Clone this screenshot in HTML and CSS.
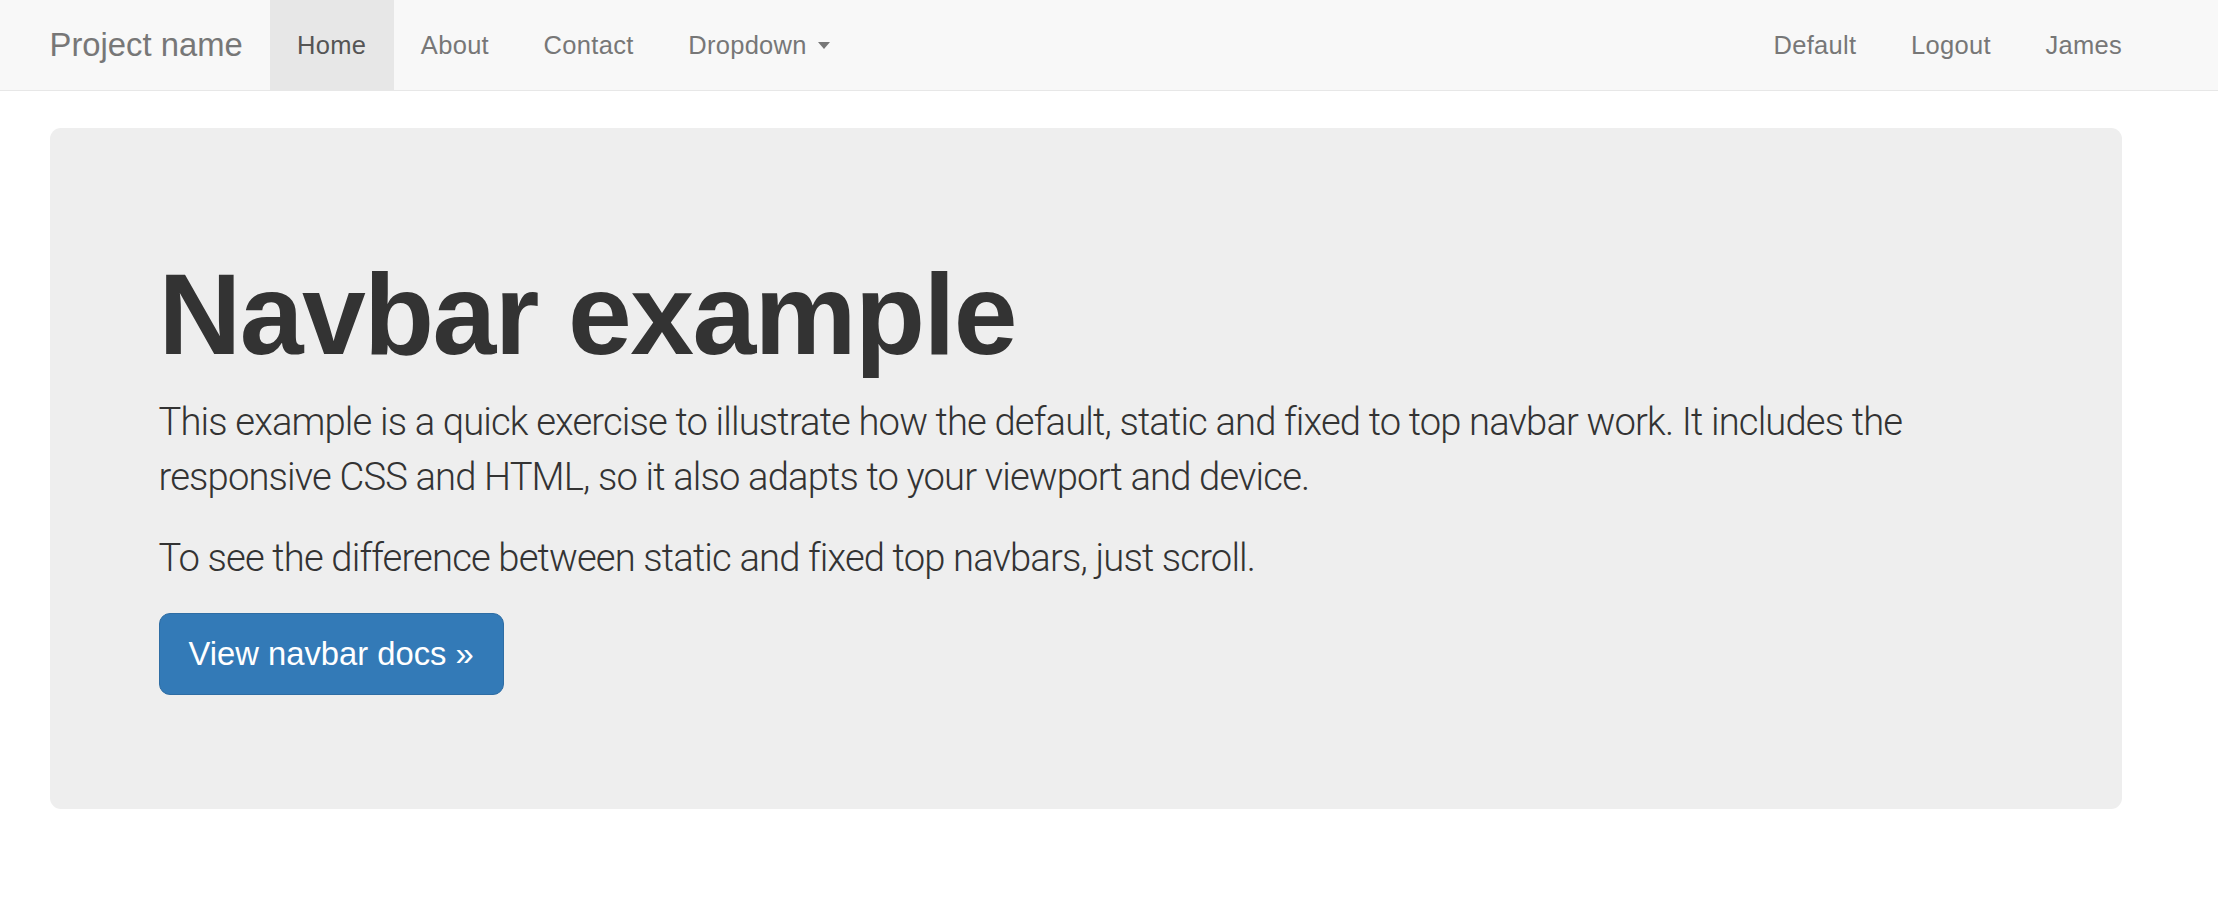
FILE: index.html
```html
<!DOCTYPE html>
<html lang="en">
<head>
<meta charset="utf-8">
<title>Navbar Template</title>
<link rel="stylesheet" href="styles.css">
</head>
<body>
<nav class="navbar">
  <div class="container nav-inner">
    <a class="brand" href="#">Project name</a>
    <ul class="nav">
      <li class="active"><a href="#">Home</a></li>
      <li><a href="#">About</a></li>
      <li><a href="#">Contact</a></li>
      <li><a href="#">Dropdown <span class="caret"></span></a></li>
    </ul>
    <ul class="nav nav-right">
      <li><a href="#">Default</a></li>
      <li><a href="#">Logout</a></li>
      <li><a href="#">James</a></li>
    </ul>
  </div>
</nav>
<main class="container">
  <div class="jumbotron">
    <h1>Navbar example</h1>
    <p>This example is a quick exercise to illustrate how the default, static and fixed to top navbar work. It includes the responsive CSS and HTML, so it also adapts to your viewport and device.</p>
    <p>To see the difference between static and fixed top navbars, just scroll.</p>
    <p class="actions"><a class="btn" href="#">View navbar docs &raquo;</a></p>
  </div>
</main>
</body>
</html>
```
FILE: styles.css
```css
* { box-sizing: border-box; }
html, body { margin: 0; padding: 0; }
body {
  font-family: "Liberation Sans", Arial, sans-serif;
  font-size: 25.5px;
  line-height: 1.43;
  color: #333;
  background: #fff;
}
a { text-decoration: none; }
.container {
  margin-left: 49.5px;
  width: 2072.5px;
}
.navbar {
  background: #f8f8f8;
  border-bottom: 1px solid #e7e7e7;
  height: 91px;
}
.nav-inner {
  display: flex;
  align-items: stretch;
  height: 90px;
}
.brand {
  display: block;
  margin-left: -27px;
  padding: 26.8px 27px;
  font-size: 32.8px;
  line-height: 36.4px;
  color: #777;
}
.nav {
  display: flex;
  list-style: none;
  margin: 0;
  padding: 0;
}
.nav li { display: block; }
.nav a {
  display: block;
  padding: 26.8px 27.3px;
  line-height: 36.4px;
  color: #777;
  font-size: 25.5px;
  letter-spacing: 0.3px;
}
.nav .active a {
  background: #e7e7e7;
  color: #555;
}
.nav-right {
  margin-left: auto;
  margin-right: -27.3px;
}
.caret {
  display: inline-block;
  width: 0;
  height: 0;
  margin-left: 3.6px;
  border-top: 7px solid #777;
  border-left: 6.5px solid transparent;
  border-right: 6.5px solid transparent;
  vertical-align: middle;
  position: relative;
  top: -2px;
}
.jumbotron {
  margin-top: 37px;
  padding: 87px 109px;
  background: #eee;
  border-radius: 11px;
}
.jumbotron h1 {
  margin: 36px 0 18px;
  font-size: 114.7px;
  line-height: 126px;
  font-weight: 700;
  letter-spacing: -1.6px;
  color: #333;
}
.jumbotron p {
  margin: 0 0 27.3px;
  font-family: Roboto, "Liberation Sans", sans-serif;
  font-weight: 300;
  font-size: 38.2px;
  line-height: 54.6px;
  letter-spacing: -0.85px;
  color: #333;
}
.btn {
  display: inline-block;
  padding: 18px 29px;
  font-family: "Liberation Sans", Arial, sans-serif;
  font-size: 32.76px;
  line-height: 43.7px;
  font-weight: 400;
  letter-spacing: 0;
  color: #fff;
  background: #337ab7;
  border: 1.8px solid #2e6da4;
  border-radius: 11px;
}
```
